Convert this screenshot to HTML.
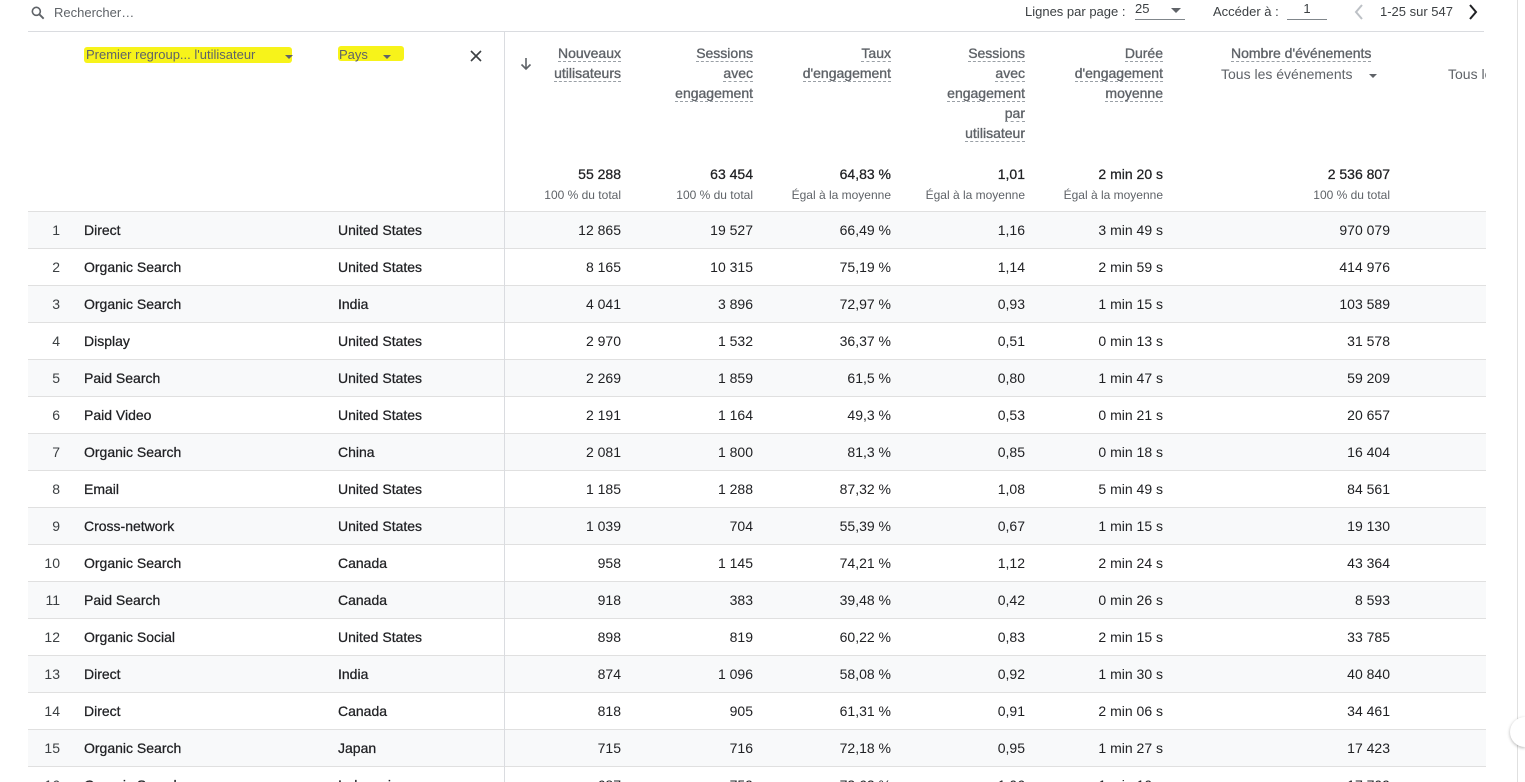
<!DOCTYPE html>
<html style="width:1525px;height:782px;overflow:hidden"><head><meta charset="utf-8"><style>
*{margin:0;padding:0;box-sizing:border-box}
body{width:1525px;height:782px;overflow:hidden;background:#fff;font-family:"Liberation Sans",sans-serif;color:#202124;position:relative}
.a{position:absolute;white-space:nowrap}
.r{position:absolute;left:28px;width:1458px;height:37px;border-bottom:1px solid #e0e0e0;font-size:14px}
.r.o{background:#f8f9fa}
.r span{position:absolute;top:10px;line-height:17px}
.n{left:0;width:32px;text-align:right;color:#3c4043}
.d{left:56px;-webkit-text-stroke:0.25px #202124}
.c{left:310px;-webkit-text-stroke:0.25px #202124}
.v{text-align:right}
.v1{right:865px}.v2{right:733px}.v3{right:595px}.v4{right:461px}.v5{right:323px}.v6{right:96px}
.h{font-size:14px;color:#5f6368;text-align:right;line-height:20px;-webkit-text-stroke:0.35px #5f6368}
.h u{text-decoration:none;border-bottom:1px dashed #9aa0a6}
.t{font-size:14px;text-align:right;-webkit-text-stroke:0.25px #202124}
.s{font-size:12px;color:#5f6368;text-align:right}
</style></head><body>
<svg class="a" style="left:30px;top:5px" width="16" height="16" viewBox="0 0 24 24"><circle cx="9.5" cy="9.5" r="6" fill="none" stroke="#5f6368" stroke-width="2.4"/><path d="M14 14l6.5 6.5" stroke="#5f6368" stroke-width="2.8"/></svg>
<div class="a" style="left:54px;top:5px;font-size:13px;color:#5f6368">Rechercher…</div>
<div class="a" style="left:1025px;top:4px;font-size:13px;color:#3c4043">Lignes par page :</div>
<div class="a" style="left:1135px;top:1px;font-size:13px;color:#3c4043;width:50px;border-bottom:1px solid #80868b;height:19px">25</div>
<div class="a" style="left:1171px;top:8px;width:0;height:0;border-left:5px solid transparent;border-right:5px solid transparent;border-top:5px solid #5f6368"></div>
<div class="a" style="left:1213px;top:4px;font-size:13px;color:#3c4043">Accéder à :</div>
<div class="a" style="left:1287px;top:1px;font-size:13px;color:#3c4043;width:40px;border-bottom:1px solid #80868b;height:19px;text-align:center">1</div>
<svg class="a" style="left:1352px;top:4px" width="14" height="16" viewBox="0 0 14 16"><path d="M10 1L4 8l6 7" fill="none" stroke="#bdc1c6" stroke-width="2"/></svg>
<div class="a" style="left:1380px;top:4px;font-size:13px;color:#3c4043">1-25 sur 547</div>
<svg class="a" style="left:1466px;top:4px" width="14" height="16" viewBox="0 0 14 16"><path d="M4 1l6 7-6 7" fill="none" stroke="#202124" stroke-width="2"/></svg>
<div class="a" style="left:28px;top:31px;width:1456px;border-top:1px solid #dadce0"></div>
<div class="a" style="left:1517px;top:0;height:782px;border-left:1px solid #e0e0e0"></div>
<div class="a" style="left:1510px;top:717px;width:15px;height:30px;border-radius:15px 0 0 15px;background:#fff;box-shadow:0 1px 3px rgba(0,0,0,.3)"></div>
<div class="a" style="left:84px;top:47px;width:208px;height:16px;background:#f7f31a;border-radius:3px"></div>
<div class="a" style="left:86px;top:47px;font-size:13px;color:#5f6368">Premier regroup... l'utilisateur</div>
<div class="a" style="left:285px;top:55px;border-left:4px solid transparent;border-right:4px solid transparent;border-top:4px solid #5f6368"></div>
<div class="a" style="left:338px;top:46px;width:66px;height:15px;background:#f7f31a;border-radius:3px"></div>
<div class="a" style="left:339px;top:47px;font-size:13px;color:#5f6368">Pays</div>
<div class="a" style="left:383px;top:55px;border-left:4px solid transparent;border-right:4px solid transparent;border-top:4px solid #5f6368"></div>
<svg class="a" style="left:470px;top:50px" width="12" height="12" viewBox="0 0 12 12"><path d="M1 1l10 10M11 1L1 11" stroke="#3c4043" stroke-width="1.6"/></svg>
<svg class="a" style="left:520px;top:57px" width="12" height="14" viewBox="0 0 12 14"><path d="M6 1v11M1.5 7.5L6 12l4.5-4.5" fill="none" stroke="#5f6368" stroke-width="1.6"/></svg>
<div class="a h" style="right:904px;top:43px"><u>Nouveaux</u><br><u>utilisateurs</u></div>
<div class="a h" style="right:772px;top:43px"><u>Sessions</u><br><u>avec</u><br><u>engagement</u></div>
<div class="a h" style="right:634px;top:43px"><u>Taux</u><br><u>d'engagement</u></div>
<div class="a h" style="right:500px;top:43px"><u>Sessions</u><br><u>avec</u><br><u>engagement</u><br><u>par</u><br><u>utilisateur</u></div>
<div class="a h" style="right:362px;top:43px"><u>Durée</u><br><u>d'engagement</u><br><u>moyenne</u></div>
<div class="a h" style="left:1231px;top:43px;text-align:left"><u>Nombre d'événements</u></div>
<div class="a" style="left:1221px;top:66px;font-size:14px;color:#5f6368">Tous les événements</div>
<div class="a" style="left:1369px;top:74px;border-left:4px solid transparent;border-right:4px solid transparent;border-top:4px solid #5f6368"></div>
<div class="a" style="left:1448px;top:66px;font-size:14px;color:#5f6368;width:38px;overflow:hidden">Tous les</div>
<div class="a t" style="right:904px;top:166px">55 288</div><div class="a s" style="right:904px;top:188px">100 % du total</div>
<div class="a t" style="right:772px;top:166px">63 454</div><div class="a s" style="right:772px;top:188px">100 % du total</div>
<div class="a t" style="right:634px;top:166px">64,83 %</div><div class="a s" style="right:634px;top:188px">Égal à la moyenne</div>
<div class="a t" style="right:500px;top:166px">1,01</div><div class="a s" style="right:500px;top:188px">Égal à la moyenne</div>
<div class="a t" style="right:362px;top:166px">2 min 20 s</div><div class="a s" style="right:362px;top:188px">Égal à la moyenne</div>
<div class="a t" style="right:135px;top:166px">2 536 807</div><div class="a s" style="right:135px;top:188px">100 % du total</div>
<div class="a" style="left:28px;top:211px;width:1458px;border-top:1px solid #e0e0e0"></div>
<div class="r o" style="top:212px"><span class="n">1</span><span class="d">Direct</span><span class="c">United States</span><span class="v v1">12 865</span><span class="v v2">19 527</span><span class="v v3">66,49 %</span><span class="v v4">1,16</span><span class="v v5">3 min 49 s</span><span class="v v6">970 079</span></div>
<div class="r" style="top:249px"><span class="n">2</span><span class="d">Organic Search</span><span class="c">United States</span><span class="v v1">8 165</span><span class="v v2">10 315</span><span class="v v3">75,19 %</span><span class="v v4">1,14</span><span class="v v5">2 min 59 s</span><span class="v v6">414 976</span></div>
<div class="r o" style="top:286px"><span class="n">3</span><span class="d">Organic Search</span><span class="c">India</span><span class="v v1">4 041</span><span class="v v2">3 896</span><span class="v v3">72,97 %</span><span class="v v4">0,93</span><span class="v v5">1 min 15 s</span><span class="v v6">103 589</span></div>
<div class="r" style="top:323px"><span class="n">4</span><span class="d">Display</span><span class="c">United States</span><span class="v v1">2 970</span><span class="v v2">1 532</span><span class="v v3">36,37 %</span><span class="v v4">0,51</span><span class="v v5">0 min 13 s</span><span class="v v6">31 578</span></div>
<div class="r o" style="top:360px"><span class="n">5</span><span class="d">Paid Search</span><span class="c">United States</span><span class="v v1">2 269</span><span class="v v2">1 859</span><span class="v v3">61,5 %</span><span class="v v4">0,80</span><span class="v v5">1 min 47 s</span><span class="v v6">59 209</span></div>
<div class="r" style="top:397px"><span class="n">6</span><span class="d">Paid Video</span><span class="c">United States</span><span class="v v1">2 191</span><span class="v v2">1 164</span><span class="v v3">49,3 %</span><span class="v v4">0,53</span><span class="v v5">0 min 21 s</span><span class="v v6">20 657</span></div>
<div class="r o" style="top:434px"><span class="n">7</span><span class="d">Organic Search</span><span class="c">China</span><span class="v v1">2 081</span><span class="v v2">1 800</span><span class="v v3">81,3 %</span><span class="v v4">0,85</span><span class="v v5">0 min 18 s</span><span class="v v6">16 404</span></div>
<div class="r" style="top:471px"><span class="n">8</span><span class="d">Email</span><span class="c">United States</span><span class="v v1">1 185</span><span class="v v2">1 288</span><span class="v v3">87,32 %</span><span class="v v4">1,08</span><span class="v v5">5 min 49 s</span><span class="v v6">84 561</span></div>
<div class="r o" style="top:508px"><span class="n">9</span><span class="d">Cross-network</span><span class="c">United States</span><span class="v v1">1 039</span><span class="v v2">704</span><span class="v v3">55,39 %</span><span class="v v4">0,67</span><span class="v v5">1 min 15 s</span><span class="v v6">19 130</span></div>
<div class="r" style="top:545px"><span class="n">10</span><span class="d">Organic Search</span><span class="c">Canada</span><span class="v v1">958</span><span class="v v2">1 145</span><span class="v v3">74,21 %</span><span class="v v4">1,12</span><span class="v v5">2 min 24 s</span><span class="v v6">43 364</span></div>
<div class="r o" style="top:582px"><span class="n">11</span><span class="d">Paid Search</span><span class="c">Canada</span><span class="v v1">918</span><span class="v v2">383</span><span class="v v3">39,48 %</span><span class="v v4">0,42</span><span class="v v5">0 min 26 s</span><span class="v v6">8 593</span></div>
<div class="r" style="top:619px"><span class="n">12</span><span class="d">Organic Social</span><span class="c">United States</span><span class="v v1">898</span><span class="v v2">819</span><span class="v v3">60,22 %</span><span class="v v4">0,83</span><span class="v v5">2 min 15 s</span><span class="v v6">33 785</span></div>
<div class="r o" style="top:656px"><span class="n">13</span><span class="d">Direct</span><span class="c">India</span><span class="v v1">874</span><span class="v v2">1 096</span><span class="v v3">58,08 %</span><span class="v v4">0,92</span><span class="v v5">1 min 30 s</span><span class="v v6">40 840</span></div>
<div class="r" style="top:693px"><span class="n">14</span><span class="d">Direct</span><span class="c">Canada</span><span class="v v1">818</span><span class="v v2">905</span><span class="v v3">61,31 %</span><span class="v v4">0,91</span><span class="v v5">2 min 06 s</span><span class="v v6">34 461</span></div>
<div class="r o" style="top:730px"><span class="n">15</span><span class="d">Organic Search</span><span class="c">Japan</span><span class="v v1">715</span><span class="v v2">716</span><span class="v v3">72,18 %</span><span class="v v4">0,95</span><span class="v v5">1 min 27 s</span><span class="v v6">17 423</span></div>
<div class="r" style="top:767px;height:15px;overflow:hidden;border-bottom:0"><span class="n">16</span><span class="d">Organic Search</span><span class="c">Indonesia</span><span class="v v1">687</span><span class="v v2">759</span><span class="v v3">73,62 %</span><span class="v v4">1,06</span><span class="v v5">1 min 10 s</span><span class="v v6">17 709</span></div>
<div class="a" style="left:504px;top:32px;height:750px;border-left:1px solid #dadce0"></div>
</body></html>
